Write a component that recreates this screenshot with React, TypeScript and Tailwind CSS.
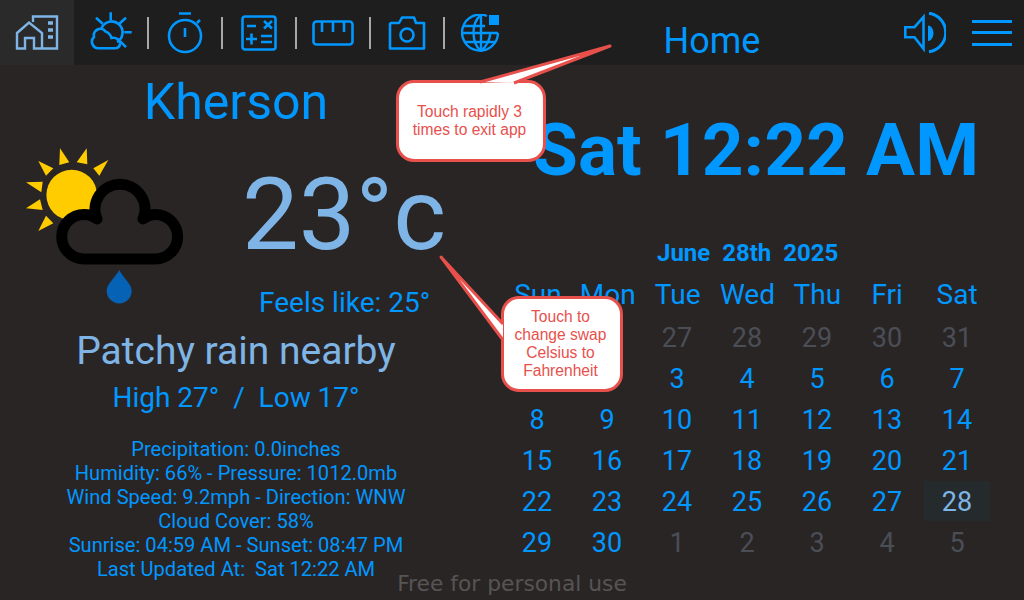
import React from 'react';

const blue = '#0097ff';

function TabIcon({ children }: { children: React.ReactNode }) {
  return <div className="w-[72px] h-full flex items-center justify-center">{children}</div>;
}

function Sep() {
  return <div className="w-[2px] h-[32px] bg-[#a8a8a8]" />;
}

function HomeIcon() {
  return (
    <svg width="44" height="36" viewBox="0 0 44 36" fill="none" stroke="#7fb5e6" strokeWidth="2.4">
      <path d="M18 7V1.500H42V33.500H28" />
      <path d="M2 18L14 7.500L27 18V33.500H19V23H10V33.500H2Z" />
      <path d="M33 8h5M33 15h5M33 22h5" strokeWidth="3.400" />
    </svg>
  );
}

function WeatherTabIcon() {
  return (
    <svg width="42" height="42" viewBox="0 0 42 42" fill="none" stroke={blue} strokeWidth="2.600">
      <path d="M20.700 0.200V8.500M6 5.800L12.700 11.800M36 5.800L29.300 11.800M34.300 20.200H41.700M30 29.200L36 35.200" />
      <path d="M11.500 16A11 11 0 1 1 27 30" />
      <path d="M9 36.200A6.500 6.500 0 0 1 4 25A6.500 6.500 0 0 1 15.500 19.500C18 20 21 23 21.500 26C26 25 30.500 28 30 32C29.500 35 27 36.200 25 36.200Z" />
    </svg>
  );
}

function TimerIcon() {
  return (
    <svg width="38" height="42" viewBox="0 0 38 42" fill="none" stroke={blue} strokeWidth="2.600">
      <path d="M13 1.500H25M19 16V25M31 11L34 8" />
      <circle cx="19" cy="24" r="16" />
    </svg>
  );
}

function CalcIcon() {
  return (
    <svg width="36" height="36" viewBox="0 0 36 36" fill="none" stroke={blue} strokeWidth="2.600">
      <rect x="1.500" y="1.500" width="33" height="33" rx="2.500" />
      <path d="M6 11H15M23 6L31 13.500M31 6L23 13.500M10.500 18.500V29.500M5 24H16M20 21H31M20 27H31" />
    </svg>
  );
}

function RulerIcon() {
  return (
    <svg width="42" height="26" viewBox="0 0 42 26" fill="none" stroke={blue} strokeWidth="2.600">
      <rect x="1.500" y="1.500" width="39" height="23" rx="3" />
      <path d="M10 2V12M21 2V12M32 2V12" />
    </svg>
  );
}

function CameraIcon() {
  return (
    <svg width="38" height="34" viewBox="0 0 38 34" fill="none" stroke={blue} strokeWidth="2.600">
      <path d="M3 7H11L14 1.500H26L28 7H36V32.500H2V8Z" strokeLinejoin="round" />
      <circle cx="19" cy="19" r="6.500" />
    </svg>
  );
}

function GlobeIcon() {
  return (
    <svg width="40" height="38" viewBox="0 0 40 38" fill="none" stroke={blue} strokeWidth="2.400">
      <path d="M26 2A18 18 0 1 0 37 19" />
      <path d="M20 1C10 9 10 28 20 37C27 31 29 25 29.500 18" />
      <path d="M20 1V37M3 12H24M1.500 19H37M4 28H35" />
      <rect x="28" y="1" width="10" height="10" fill={blue} stroke="none" />
    </svg>
  );
}

function SpeakerIcon() {
  return (
    <svg width="42" height="42" viewBox="0 0 42 42" fill="none" stroke={blue} strokeWidth="2.600">
      <path d="M1.300 15.200H10.500L19.500 5V36.800L10.500 25.200H1.300Z" />
      <path d="M24 13.500A5.500 7.750 0 0 1 24 29Z" fill={blue} stroke="none" />
      <path d="M25 1.200A19.500 19.500 0 0 1 25 39.800" strokeWidth="3" />
    </svg>
  );
}

function WeatherArt() {
  return (
    <svg width="162" height="158" viewBox="0 0 162 158">
      <circle cx="47.700" cy="48" r="25.300" fill="#ffcc00" />
      <g fill="#ffcc00">
        <path d="M36 1.300L45.300 15.300L35.300 18Z" />
        <path d="M62.700 1.300L63.300 17.300L52.700 15.300Z" />
        <path d="M84.300 13L75.300 28.700L69.300 21.300Z" />
        <path d="M14.300 14L29.300 21.300L22 28.700Z" />
        <path d="M2 35.300L18.700 34.700L17.300 45.300Z" />
        <path d="M2 61.300L16 52.300L18.700 63Z" />
        <path d="M14.300 84L22 68.700L29.300 76.300Z" />
      </g>
      <path
        d="M60 112A22.300 22.300 0 0 1 60 67.400Q67 67.400 73 72A25 25 0 1 1 119 72Q125 67.400 131.300 67.400A22.300 22.300 0 0 1 131.300 112Z"
        fill="#2a2525"
        stroke="#000"
        strokeWidth="11"
        strokeLinejoin="round"
      />
      <path d="M95.300 123C90 132 82.700 137 82.700 144A12.500 12.500 0 0 0 107.700 144C107.700 137 100 132 95.300 123Z" fill="#0562b4" />
    </svg>
  );
}

function Callout({ className, children }: { className: string; children: React.ReactNode }) {
  return (
    <div
      className={`absolute z-20 bg-white border-[3px] border-[#e8504c] rounded-[18px] flex items-center justify-center text-center text-[#e8504c] text-[15.600px] leading-[18px] font-['Liberation_Sans',sans-serif] ${className}`}
    >
      {children}
    </div>
  );
}

const headers = ['Sun', 'Mon', 'Tue', 'Wed', 'Thu', 'Fri', 'Sat'];
const days: [number, string][] = [
  [25, 'o'], [26, 'o'], [27, 'o'], [28, 'o'], [29, 'o'], [30, 'o'], [31, 'o'],
  [1, 'c'], [2, 'c'], [3, 'c'], [4, 'c'], [5, 'c'], [6, 'c'], [7, 'c'],
  [8, 'c'], [9, 'c'], [10, 'c'], [11, 'c'], [12, 'c'], [13, 'c'], [14, 'c'],
  [15, 'c'], [16, 'c'], [17, 'c'], [18, 'c'], [19, 'c'], [20, 'c'], [21, 'c'],
  [22, 'c'], [23, 'c'], [24, 'c'], [25, 'c'], [26, 'c'], [27, 'c'], [28, 't'],
  [29, 'c'], [30, 'c'], [1, 'o'], [2, 'o'], [3, 'o'], [4, 'o'], [5, 'o'],
];

const details = [
  'Precipitation: 0.0inches',
  'Humidity: 66% - Pressure: 1012.0mb',
  'Wind Speed: 9.2mph - Direction: WNW',
  'Cloud Cover: 58%',
  'Sunrise: 04:59 AM - Sunset: 08:47 PM',
  'Last Updated At:\u00a0\u00a0Sat 12:22 AM',
];

export default function App() {
  return (
    <div className="relative w-[1024px] h-[600px] overflow-hidden flex flex-col bg-[#2a2525] text-[#0097ff] font-['Roboto',sans-serif]">
      <header className="h-[65px] shrink-0 flex items-center bg-[#1e1e1e]">
        <div className="w-[74px] h-full bg-[#2a2a2a] flex items-center justify-center">
          <HomeIcon />
        </div>
        <div className="w-px" />
        <TabIcon><WeatherTabIcon /></TabIcon>
        <Sep />
        <TabIcon><TimerIcon /></TabIcon>
        <Sep />
        <TabIcon><CalcIcon /></TabIcon>
        <Sep />
        <TabIcon><RulerIcon /></TabIcon>
        <Sep />
        <TabIcon><CameraIcon /></TabIcon>
        <Sep />
        <TabIcon><GlobeIcon /></TabIcon>
        <div className="w-[120px]" />
        <div className="w-[150px] text-center text-[36px] leading-none pt-[17px]">Home</div>
        <div className="flex-1" />
        <div className="mr-[26px]"><SpeakerIcon /></div>
        <div className="mr-[12px] w-[40px] flex flex-col gap-[8.500px]">
          <div className="h-[3px] bg-[#0097ff]" />
          <div className="h-[3px] bg-[#0097ff]" />
          <div className="h-[3px] bg-[#0097ff]" />
        </div>
      </header>

      <main className="flex-1 flex">
        <section className="w-[472px] shrink-0 flex flex-col items-center">
          <div className="text-[50px] leading-[59px] mt-[8px]">Kherson</div>
          <div className="w-full flex mt-[5px]">
            <div className="ml-[24px] mt-[10px] w-[162px] shrink-0"><WeatherArt /></div>
            <div className="flex-1 flex flex-col">
              <div className="ml-[56px] mt-[19px] text-[101px] leading-[118px] text-[#7fb5e6] whitespace-nowrap">23°c</div>
              <div className="ml-[73px] mt-[12px] text-[28px] leading-[33px] whitespace-nowrap">Feels like: 25°</div>
            </div>
          </div>
          <div className="text-[39px] leading-[46px] text-[#7fb5e6] mt-[9px] whitespace-nowrap">Patchy rain nearby</div>
          <div className="text-[28px] leading-[33px] mt-[7px] whitespace-pre">High 27°  /  Low 17°</div>
          <div className="mt-[23px] flex flex-col items-center text-[20.100px] leading-[24px]">
            {details.map((d) => (
              <div key={d} className="whitespace-nowrap">{d}</div>
            ))}
          </div>
        </section>

        <section className="flex-1 flex flex-col">
          <div className="ml-[61px] mt-[42px] text-[73px] leading-[86px] font-bold whitespace-nowrap">Sat 12:22 AM</div>
          <div className="ml-[185px] mt-[46px] text-[24px] leading-[28px] font-bold whitespace-pre">June  28th  2025</div>
          <div className="ml-[30px] mt-[8px] w-[490px] flex flex-col">
            <div className="grid grid-cols-7 h-[43px] pl-[1px] text-[28px]">
              {headers.map((h) => (
                <div key={h} className="h-[39px] flex items-center justify-center">{h}</div>
              ))}
            </div>
            <div className="grid grid-cols-7 auto-rows-[41px] text-[27px]">
              {days.map(([n, kind], i) => (
                <div
                  key={i}
                  className={
                    kind === 'o'
                      ? 'flex items-center justify-center text-[#4a4e57]'
                      : kind === 't'
                        ? 'flex items-center justify-center text-[#7fb5e6] bg-[#252a2c] mx-[2px] h-[40px] -mt-[1px] pt-[2px]'
                        : 'flex items-center justify-center'
                  }
                >
                  {n}
                </div>
              ))}
            </div>
          </div>
        </section>
      </main>

      <div className="absolute left-0 right-0 bottom-[3px] text-center text-[21.800px] leading-[26px] text-[#565454] font-['DejaVu_Sans',sans-serif] pointer-events-none">
        Free for personal use
      </div>

      <Callout className="left-[396px] top-[80px] w-[150px] h-[82px] z-40">
        <span className="pr-[3px]">Touch rapidly 3<br />times to exit app</span>
      </Callout>
      <Callout className="left-[501px] top-[296px] w-[122px] h-[96px] z-40">
        <span className="pr-[3px]">Touch to<br />change swap<br />Celsius to<br />Fahrenheit</span>
      </Callout>
      <svg className="absolute z-50 left-0 top-0 pointer-events-none" width="1024" height="600" fill="#fff" stroke="#e8504c" strokeWidth="3">
        <path d="M480 82L610 46L514 83" strokeLinejoin="round" />
        <path d="M503 324L441 257L503 340" strokeLinejoin="round" />
      </svg>
    </div>
  );
}
